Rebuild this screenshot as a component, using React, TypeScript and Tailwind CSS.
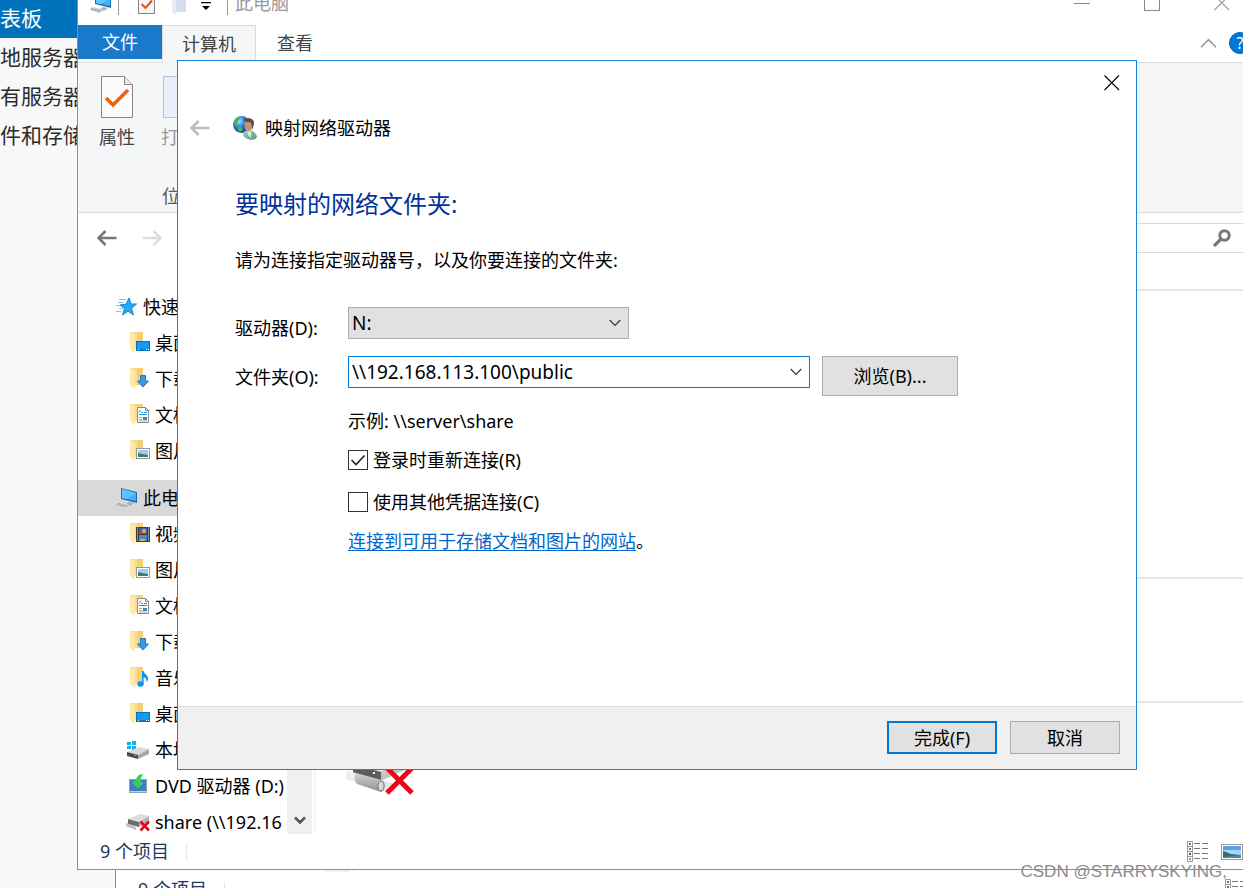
import React, { useState } from 'react';

type IconProps = { className?: string };

const ComputerIcon: React.FC<IconProps> = ({ className = 'w-6 h-6' }) => (
  <svg viewBox="0 0 24 24" className={className} aria-hidden="true">
    <polygon points="6,2 22,6 22,17 6,13" fill="#1b6fae" />
    <polygon points="7,3 21,7 21,15 7,12" fill="#3fb1fb" />
    <polygon points="7,3 21,7 12,13 7,12" fill="#63c3ff" />
    <polygon points="14,16 19,17 16,19 11,18" fill="#a9b3ba" />
    <polygon points="4,16 15,19 10,22 0,18" fill="#cfd5da" />
    <path d="M3 17.500l10 2.500M2 18.500l9 2.500M14 18.500l3 .8" stroke="#8c98a3" strokeWidth="1" strokeDasharray="2 1" fill="none" />
  </svg>
);

const StarIcon: React.FC<IconProps> = ({ className = 'w-6 h-6' }) => (
  <svg viewBox="0 0 24 24" className={className} aria-hidden="true">
    <path d="M14 3l2 6h5.500l-5 4.500 2 6.500-5.500-4L7.500 20l2-6.500L5 10l6-.8z" fill="#2aa9f5" stroke="#1583cc" strokeWidth="1" />
    <path d="M4 4.500h7M3 7.500h6M1 10.500h4M4 13.500h4M1 16.500h5" stroke="#7cc8f5" strokeWidth="1" />
  </svg>
);

const FolderBase: React.FC<{ children?: React.ReactNode }> = ({ children }) => (
  <svg viewBox="0 0 24 24" className="w-6 h-6" aria-hidden="true">
    <rect x="4" y="1" width="13" height="17" fill="#f9dd8f" />
    <rect x="11" y="1" width="6" height="17" fill="#f4d078" />
    <polygon points="4,1 9,4 9,22 4,18" fill="#ffe9a9" />
    {children}
  </svg>
);

const DesktopFolder = () => (
  <FolderBase>
    <rect x="10.500" y="10.500" width="13" height="9" fill="#129bf5" stroke="#0b6fb5" />
    <path d="M11 18.500h12" stroke="#0a78c8" />
    <path d="M12 18.500h1M20 18.500h1M22 18.500h1" stroke="#fff" />
  </FolderBase>
);

const DownloadFolder = () => (
  <FolderBase>
    <path d="M14.500 8.500h5v5.500h3L17 20l-5.500-6h3z" fill="#3b97e3" stroke="#2478bd" />
  </FolderBase>
);

const DocumentFolder = () => (
  <FolderBase>
    <path d="M11.500 4.500h8l3 3v12h-11z" fill="#fff" stroke="#8b8b8b" />
    <path d="M19.500 4.500v3h3" fill="none" stroke="#8b8b8b" />
    <path d="M13 9.500l2-3M15 9.500h2M13 11.500h8M18 9.500h3" stroke="#1f93d4" />
    <path d="M13 14.500h3M13 16.500h3M13 18h8" stroke="#aaa" />
    <rect x="17" y="14" width="4" height="3" fill="#4585b5" />
  </FolderBase>
);

const PictureFolder = () => (
  <FolderBase>
    <rect x="10.500" y="9.500" width="13" height="10" fill="#fff" stroke="#979797" />
    <rect x="12" y="11" width="10" height="7" fill="#9fcdf2" />
    <path d="M12 14l4 1 6 1v2H12z" fill="#3f7a6a" />
  </FolderBase>
);

const VideoFolder = () => (
  <FolderBase>
    <rect x="10" y="5" width="14" height="15" fill="#3a3a3a" />
    <path d="M11.500 5.500v14M22.500 5.500v14" stroke="#e8e8e8" strokeDasharray="1 1" />
    <rect x="13" y="6" width="8" height="6" fill="#3b62c4" />
    <rect x="13" y="13" width="8" height="6" fill="#4a86dc" />
    <circle cx="18" cy="9" r="2" fill="#e9b520" />
    <path d="M13 10h4v2h-4z" fill="#d8432b" />
    <path d="M14 17h5v2h-5z" fill="#e9b520" />
  </FolderBase>
);

const MusicFolder = () => (
  <FolderBase>
    <ellipse cx="14.500" cy="18" rx="3.200" ry="2.700" fill="#0a97f0" />
    <path d="M16 18V5h1.600c.4 3 4.500 4 4.500 7.500 0 1.700-.8 3-1.500 3.800.4-3-1-4.500-3-5V18z" fill="#0a97f0" />
  </FolderBase>
);

const LocalDiskIcon = () => (
  <svg viewBox="0 0 24 24" className="w-6 h-6" aria-hidden="true">
    <path d="M1 4h4v3H1zM6 3h4v4H6zM1 8h4v3H1zM6 8h4v4H6z" fill="#17b0ef" />
    <polygon points="1,14 13,9 23,11 12,17" fill="#d9dadb" />
    <polygon points="1,14 12,17 12,21 1,18" fill="#4a4a4a" />
    <polygon points="12,17 23,11 23,16 12,21" fill="#a8a9ab" />
    <rect x="8" y="17" width="2" height="1" fill="#35d24d" />
  </svg>
);

const DvdIcon = () => (
  <svg viewBox="0 0 24 24" className="w-6 h-6" aria-hidden="true">
    <rect x="3.500" y="5.500" width="17" height="13" fill="#3f7fc0" stroke="#8fa1b3" />
    <path d="M4 17.500h16" stroke="#c5d2de" />
    <path d="M17 0c-4 0-7 3-7 8H6.500l5.500 6 5-5h-3c0-4 1-6 3-9z" fill="#2fd04f" stroke="#5fdc77" strokeWidth=".6" />
  </svg>
);

const ShareDriveIcon = () => (
  <svg viewBox="0 0 24 24" className="w-6 h-6" aria-hidden="true">
    <polygon points="2,9 14,4 23,6 13,12" fill="#dcdcdd" />
    <polygon points="2,9 13,12 13,17 2,14" fill="#6c6c6e" />
    <polygon points="13,12 23,6 23,12 13,17" fill="#b4b5b7" />
    <polygon points="0,13 10,17 10,20 0,16" fill="#bdbec0" />
    <path d="M14.500 11.500l8.500 9M23 11.500l-8.500 9" stroke="#e0071b" strokeWidth="2.600" />
  </svg>
);

const PropertiesIcon: React.FC<IconProps> = ({ className = 'w-8 h-[42px]' }) => (
  <svg viewBox="0 0 32 42" className={className} aria-hidden="true">
    <path d="M.5.500h23l8 8v33H.500z" fill="#fbfbfb" stroke="#858585" />
    <path d="M23.500.500v8h8" fill="#ececec" stroke="#858585" />
    <path d="M5 22l7 7L27 14" fill="none" stroke="#f2600f" strokeWidth="3.600" />
  </svg>
);

const QuickPropertiesIcon = () => (
  <svg viewBox="0 0 18 24" className="w-[18px] h-6" aria-hidden="true">
    <rect x=".5" y=".5" width="16" height="22" fill="#f6f7fa" stroke="#858585" />
    <path d="M3.500 13l4 4L14 9.500" fill="none" stroke="#f2500f" strokeWidth="2.200" />
  </svg>
);

const NetworkUserIcon = () => (
  <svg viewBox="0 0 24 24" className="w-6 h-6" aria-hidden="true">
    <defs>
      <radialGradient id="globe" cx=".35" cy=".3" r=".8">
        <stop offset="0" stopColor="#a5e4ff" />
        <stop offset=".45" stopColor="#2a7be0" />
        <stop offset="1" stopColor="#0c2a86" />
      </radialGradient>
      <linearGradient id="coat" x1="0" y1="0" x2="1" y2="1">
        <stop offset="0" stopColor="#a8d3bf" />
        <stop offset="1" stopColor="#4f9c7c" />
      </linearGradient>
    </defs>
    <circle cx="8.500" cy="8.500" r="8.500" fill="url(#globe)" />
    <path d="M1 6c1-4 4-5 7-5L6 4 4 6l1 3-3 1zM5 10l4 1 1 3-3 2c-2-1-3-3-2-6z" fill="#47b552" />
    <path d="M10 18c1-3 3-4 5-4 5 0 8 3 9 7-1 2-3 3-6 3-5-1-8-3-8-6z" fill="url(#coat)" />
    <path d="M14 14l4 1 0 7-3-3z" fill="#d9ebe2" />
    <ellipse cx="15.500" cy="9.500" rx="4" ry="6" fill="#c09673" />
    <path d="M10 4c2-3 10-3 11 2 0 3-1 6-2 8 0-4 0-6-2-8-2 0-5 0-7-2z" fill="#5a4e48" />
  </svg>
);

const PhotoIcon: React.FC<IconProps> = ({ className = 'w-[22px] h-4' }) => (
  <svg viewBox="0 0 22 16" className={className} aria-hidden="true">
    <rect x=".5" y=".5" width="21" height="15" fill="#fff" stroke="#9a9a9a" />
    <rect x="2" y="2" width="18" height="12" fill="#a9d3f7" />
    <path d="M2 2h18v4H2z" fill="#5fa0ea" />
    <path d="M2 7l8 3 10 1v3H2z" fill="#356e62" />
    <path d="M2 13l18-2v3H2z" fill="#4c86b5" />
  </svg>
);

const DetailsIcon = () => (
  <svg viewBox="0 0 21 21" className="w-[21px] h-[21px]" aria-hidden="true">
    <path d="M.5.500h5v20h-5zM.5 5.500h5M.5 10.500h5M.5 15.500h5" fill="#fff" stroke="#999" />
    <path d="M7 2.500h6M15 2.500h6M7 7.500h6M15 7.500h6M7 12.500h6M15 12.500h6M7 17.500h6M15 17.500h6" stroke="#777" />
    <rect x="2" y="2" width="2" height="2" fill="#3a7ab8" />
    <rect x="2" y="7" width="2" height="2" fill="#6b8043" />
    <rect x="2" y="12" width="2" height="2" fill="#d0281c" />
    <rect x="2" y="17" width="2" height="2" fill="#79a08a" />
  </svg>
);

const ArrowIcon: React.FC<IconProps> = ({ className }) => (
  <svg viewBox="0 0 20 16" className={className} fill="none" stroke="currentColor" aria-hidden="true">
    <path d="M8.500 1L1.500 8l7 7M2 8h17.500" strokeWidth="2.600" />
  </svg>
);

const CloseIcon: React.FC<IconProps> = ({ className }) => (
  <svg viewBox="0 0 16 16" className={className} fill="none" stroke="currentColor" aria-hidden="true">
    <path d="M.5.500l14.500 14.500M15 .5L.500 15" strokeWidth="1.100" />
  </svg>
);

const ChevronIcon: React.FC<IconProps> = ({ className }) => (
  <svg viewBox="0 0 12 8" className={className} fill="none" stroke="currentColor" aria-hidden="true">
    <path d="M.7 1L6 6.300 11.300 1" strokeWidth="1.200" />
  </svg>
);

const NetworkDriveIcon = () => (
  <svg viewBox="0 0 72 60" className="w-[72px] h-[60px]" aria-hidden="true">
    <defs>
      <linearGradient id="pipe" x1="0" y1="0" x2="0" y2="1">
        <stop offset="0" stopColor="#d2d3d4" />
        <stop offset="1" stopColor="#8e8f91" />
      </linearGradient>
    </defs>
    <polygon points="8,26 36,12 66,20 36,34" fill="#dedede" />
    <polygon points="8,26 36,34 36,43 8,35" fill="#5c5c5e" />
    <polygon points="36,34 66,20 64,30 36,43" fill="#c4c5c7" />
    <path d="M3 33l8 2v9l-8-2c-3-1-3-8 0-9z" fill="#ededee" />
    <path d="M38 43l12 3v8l-12-1z" fill="#e6e6e7" />
    <path d="M11 35l26 7c4 2 4 10-1 12l-24-8c-3-3-3-8-1-11z" fill="url(#pipe)" />
    <ellipse cx="36" cy="48" rx="3" ry="5" fill="#d9d9da" stroke="#7f8082" />
    <rect x="28" y="34" width="2" height="2" fill="#ededed" />
    <path d="M42 30l25 25M69 28L42 55" stroke="#e3091c" strokeWidth="5" />
  </svg>
);

const treeItems = [
  { label: '桌面', icon: <DesktopFolder /> },
  { label: '下载', icon: <DownloadFolder /> },
  { label: '文档', icon: <DocumentFolder /> },
  { label: '图片', icon: <PictureFolder /> },
];

const computerItems = [
  { label: '视频', icon: <VideoFolder /> },
  { label: '图片', icon: <PictureFolder /> },
  { label: '文档', icon: <DocumentFolder /> },
  { label: '下载', icon: <DownloadFolder /> },
  { label: '音乐', icon: <MusicFolder /> },
  { label: '桌面', icon: <DesktopFolder /> },
  { label: '本地磁盘', icon: <LocalDiskIcon /> },
  { label: 'DVD 驱动器 (D:)', icon: <DvdIcon /> },
  { label: 'share (\\\\192.16', icon: <ShareDriveIcon /> },
];

const TreeItem: React.FC<{ label: string; icon: React.ReactNode }> = ({ label, icon }) => (
  <li className="flex items-center h-9 pl-12 gap-[5px] whitespace-nowrap">
    <span className="shrink-0">{icon}</span>
    {label}
  </li>
);

const StatusBar = () => (
  <footer className="shrink-0 flex items-center h-[35px] pl-[22px] pr-[25px] bg-white text-[#1e395b]">
    <span>9 个项目</span>
    <span className="w-px h-4 ml-[17px] bg-gray-200" />
    <div className="ml-auto flex items-center gap-[13px]">
      <button aria-label="详细信息"><DetailsIcon /></button>
      <button aria-label="大图标"><PhotoIcon /></button>
    </div>
  </footer>
);

const ServerSidebar = () => (
  <nav className="w-[84px] text-[21px] text-[#2b2b2b] whitespace-nowrap">
    <ul>
      <li className="h-[38px] flex items-center bg-[#0072bc] text-white">表板</li>
      <li className="h-[39px] flex items-center">地服务器</li>
      <li className="h-[39px] flex items-center">有服务器</li>
      <li className="h-[39px] flex items-center">件和存储</li>
    </ul>
  </nav>
);

const BackgroundWindow = () => (
  <div className="absolute left-[115px] right-[-64px] bottom-[-20px] h-96 flex flex-col bg-white border border-[#8f8f8f]">
    <div className="flex-1 flex pl-[209px] gap-0.5">
      <div className="w-[25px] bg-[#f0f0f0]" />
      <div className="w-0.5 bg-[#f5f5f5]" />
    </div>
    <StatusBar />
  </div>
);

const ExplorerWindow = () => (
  <div className="absolute left-[77px] right-[-26px] top-[-20px] bottom-[18px] flex flex-col bg-white border border-[#8f8f8f]">
    <header className="shrink-0 flex items-center h-11 pl-[11px] pr-[38px] text-[#999]">
      <ComputerIcon />
      <span className="w-px h-6 mx-[5px] bg-[#999]" />
      <span className="ml-3.5"><QuickPropertiesIcon /></span>
      <svg viewBox="0 0 14 24" className="w-3.5 h-6 ml-4" aria-hidden="true">
        <rect x="4" y="0" width="10" height="21" fill="#d3dff0" />
        <polygon points="0,0 4,3 4,24 0,21" fill="#e6edf7" />
      </svg>
      <svg viewBox="0 0 10 16" className="w-2.5 h-4 ml-[15px]" aria-hidden="true">
        <path d="M0 7h10v1.200H0zM1 11h8l-4 4z" fill="#000" />
      </svg>
      <span className="w-px h-6 ml-4 mr-[7px] bg-[#999]" />
      <span>此电脑</span>
      <div className="ml-auto flex items-center gap-[54px]">
        <button aria-label="最小化" className="w-4 h-4 flex items-center"><span className="w-full h-px bg-[#888]" /></button>
        <button aria-label="最大化" className="w-4 h-4 border border-[#888]" />
        <button aria-label="关闭窗口"><CloseIcon className="w-4 h-4" /></button>
      </div>
    </header>

    <div className="shrink-0 flex h-[38px] border-b border-[#dadbdc] text-[#444]">
      <button className="w-[84px] h-[34px] bg-[#1979ca] text-white">文件</button>
      <button className="w-[94px] h-[38px] bg-[#f5f6f7] border border-b-0 border-[#dadbdc]">计算机</button>
      <button className="w-[78px] h-9">查看</button>
      <div className="ml-auto flex items-center h-9 gap-3 pr-[17px]">
        <ChevronIcon className="w-[17px] h-3 rotate-180 text-[#999]" />
        <button aria-label="帮助" className="w-[22px] h-[22px] rounded-full bg-[#0078d7] border border-[#0a5ea5] text-white text-base leading-5">?</button>
      </div>
    </div>

    <div className="shrink-0 h-[150px] bg-[#f5f6f7] border-b border-[#dadbdc]">
      <div className="flex flex-col justify-between w-[204px] h-full pt-[13px] pb-1 leading-6 text-[#444]">
        <div className="flex pl-[21px] gap-[26px]">
          <button className="flex flex-col items-center gap-[7px]">
            <PropertiesIcon />
            属性
          </button>
          <button className="flex flex-col items-center gap-[7px] text-[#9a9a9a]" disabled>
            <span className="w-8 h-[42px] bg-[#e8effb] border border-[#b4c3dd]" />
            打开
          </button>
        </div>
        <span className="text-center text-[#5a5a5a]">位置</span>
      </div>
    </div>

    <div className="shrink-0 flex items-start h-[76px] pt-2.5">
      <div className="flex items-center h-[30px] pl-[19px] gap-[25px]">
        <button aria-label="返回"><ArrowIcon className="w-5 h-4 text-[#777]" /></button>
        <button aria-label="前进"><ArrowIcon className="w-5 h-4 rotate-180 text-[#ddd]" /></button>
      </div>
      <div className="flex-1 flex justify-end items-center h-[30px] ml-10 pr-9 border border-[#d9d9d9]">
        <svg viewBox="0 0 18 18" className="w-[18px] h-[18px]" fill="none" stroke="#777" aria-hidden="true">
          <circle cx="11.500" cy="6.500" r="4.700" strokeWidth="3" />
          <path d="M8 10l-7 7" strokeWidth="3.200" />
        </svg>
      </div>
    </div>

    <div className="flex-1 min-h-0 flex overflow-hidden">
      <ul className="w-[209px] shrink-0 overflow-hidden text-black">
        <li className="flex items-center h-9 pl-[37px] gap-1 whitespace-nowrap"><StarIcon />快速访问</li>
        {treeItems.map((item) => (
          <TreeItem key={item.label} {...item} />
        ))}
        <li className="flex items-center h-9 mt-[11px] pl-[37px] gap-1 bg-[#d9d9d9] whitespace-nowrap"><ComputerIcon />此电脑</li>
        {computerItems.map((item) => (
          <TreeItem key={item.label} {...item} />
        ))}
      </ul>
      <div className="w-[25px] shrink-0 flex items-end justify-center pb-2 bg-[#f0f0f0]">
        <svg viewBox="0 0 12 10" className="w-3 h-2.5" fill="none" stroke="#555" aria-hidden="true">
          <path d="M1 1.500l5 5 5-5" strokeWidth="2.600" />
        </svg>
      </div>
      <div className="w-0.5 shrink-0 ml-0.5 bg-[#f5f5f5]" />
      <main className="flex-1">
        <section className="h-72 border-t-2 border-[#e5e5e5]" />
        <section className="h-[124px] border-t-2 border-[#e5e5e5]" />
        <section className="border-t-2 border-[#e5e5e5] pt-[35px] pl-[29px]">
          <NetworkDriveIcon />
        </section>
      </main>
    </div>

    <StatusBar />
  </div>
);

const CheckOption: React.FC<{
  id: string;
  label: string;
  checked: boolean;
  onChange: (value: boolean) => void;
}> = ({ id, label, checked, onChange }) => (
  <div className="flex items-center gap-[5px] h-6">
    <span className="relative w-5 h-5">
      <input
        id={id}
        type="checkbox"
        checked={checked}
        onChange={(e) => onChange(e.target.checked)}
        className="block w-5 h-5 appearance-none bg-white border border-[#333]"
      />
      {checked && (
        <svg viewBox="0 0 20 20" className="absolute inset-0 pointer-events-none" fill="none" stroke="#222" aria-hidden="true">
          <path d="M3.500 10l4.500 4.500L16.500 5.500" strokeWidth="1.600" />
        </svg>
      )}
    </span>
    <label htmlFor={id}>{label}</label>
  </div>
);

const MapDriveDialog = () => {
  const [drive, setDrive] = useState('N:');
  const [folder, setFolder] = useState('\\\\192.168.113.100\\public');
  const [reconnect, setReconnect] = useState(true);
  const [otherCredentials, setOtherCredentials] = useState(false);

  return (
    <form
      role="dialog"
      aria-labelledby="dialog-title"
      onSubmit={(e) => e.preventDefault()}
      className="absolute left-[177px] right-[106px] top-[60px] bottom-[118px] flex flex-col bg-white border border-[#1883d7] leading-6 text-black"
    >
      <div className="flex items-center justify-end h-[43px] pr-4">
        <button type="button" aria-label="关闭"><CloseIcon className="w-4 h-4" /></button>
      </div>
      <div className="flex items-center h-12 pl-3">
        <button type="button" aria-label="上一步" disabled><ArrowIcon className="w-5 h-4 text-[#bbb]" /></button>
        <div className="flex items-center gap-2 ml-[23px]">
          <NetworkUserIcon />
          <h1 id="dialog-title">映射网络驱动器</h1>
        </div>
      </div>

      <div className="px-[57px] pt-9">
        <h2 className="text-2xl leading-8 text-[#003399]">要映射的网络文件夹:</h2>
        <p className="mt-7">请为连接指定驱动器号，以及你要连接的文件夹:</p>

        <div className="flex items-start mt-[35px]">
          <label htmlFor="drive" className="w-[113px] pt-[9px]">驱动器(D):</label>
          <div className="relative w-[281px]">
            <select
              id="drive"
              value={drive}
              onChange={(e) => setDrive(e.target.value)}
              className="block w-full h-8 px-[3px] appearance-none bg-[#e1e1e1] border border-[#adadad] text-[19px]"
            >
              <option>N:</option>
            </select>
            <ChevronIcon className="absolute right-2 top-3 w-3 h-2 pointer-events-none text-[#333]" />
          </div>
        </div>

        <div className="flex items-start mt-4">
          <label htmlFor="folder" className="w-[113px] pt-[9px]">文件夹(O):</label>
          <div className="flex items-center w-[462px] h-8 pr-[7px] border border-[#0078d7]">
            <input
              id="folder"
              type="text"
              value={folder}
              onChange={(e) => setFolder(e.target.value)}
              className="flex-1 h-full px-[3px] text-[19px] outline-none"
            />
            <ChevronIcon className="w-3 h-2 text-[#333]" />
          </div>
          <button type="button" className="w-[136px] h-10 ml-3 bg-[#e1e1e1] border border-[#adadad]">浏览(B)...</button>
        </div>

        <div className="flex flex-col pl-[113px] mt-[13px]">
          <p>示例: \\server\share</p>
          <div className="flex flex-col gap-[18px] my-[15px]">
            <CheckOption id="reconnect" label="登录时重新连接(R)" checked={reconnect} onChange={setReconnect} />
            <CheckOption id="credentials" label="使用其他凭据连接(C)" checked={otherCredentials} onChange={setOtherCredentials} />
          </div>
          <p>
            <a href="#website" className="text-[#0066cc] underline underline-offset-2">连接到可用于存储文档和图片的网站</a>。
          </p>
        </div>
      </div>

      <div className="flex items-start justify-end gap-[13px] h-[63px] mt-auto pt-3.5 pr-4 bg-[#f0f0f0] border-t border-[#dfdfdf]">
        <button type="submit" className="w-[110px] h-[33px] bg-[#e1e1e1] border-2 border-[#0078d7]">完成(F)</button>
        <button type="button" className="w-[110px] h-[33px] bg-[#e1e1e1] border border-[#adadad]">取消</button>
      </div>
    </form>
  );
};

const App: React.FC = () => (
  <div className="relative h-screen overflow-hidden bg-[#f8f8f8] font-['Noto_Sans','Noto_Sans_CJK_SC',sans-serif] text-[18px]">
    <ServerSidebar />
    <BackgroundWindow />
    <ExplorerWindow />
    <MapDriveDialog />
    <span className="absolute right-4 bottom-1 font-['Liberation_Sans',sans-serif] text-[17px] leading-6 text-[#8c8c8c]">
      CSDN @STARRYSKYING,
    </span>
  </div>
);

export default App;
